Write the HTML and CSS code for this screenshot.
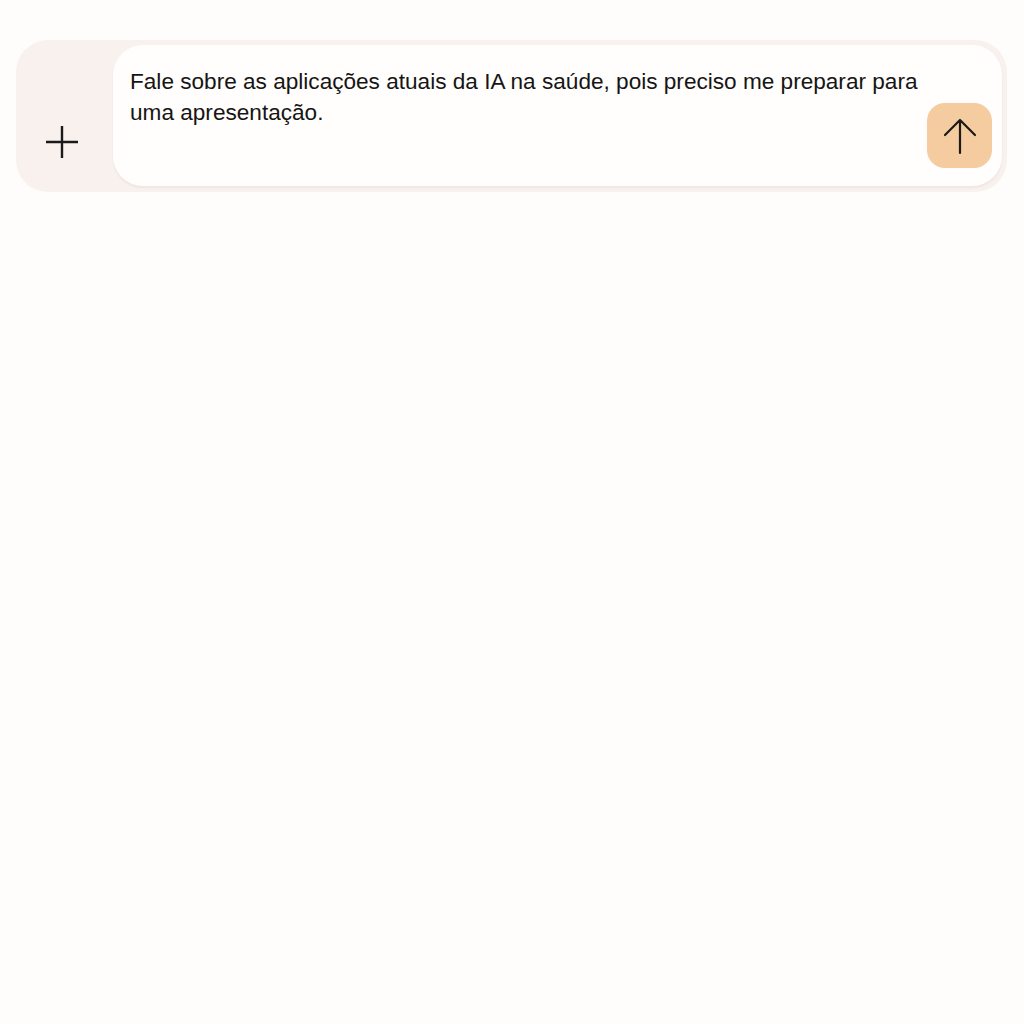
FILE: index.html
```html
<!DOCTYPE html>
<html lang="pt">
<head>
<meta charset="utf-8">
<title>Chat</title>
<link rel="stylesheet" href="styles.css">
</head>
<body>
<div class="composer">
  <button class="attach" aria-label="Adicionar">
    <svg width="34" height="34" viewBox="0 0 34 34"><path d="M17 1v32M1 17h32" stroke="#1c1a19" stroke-width="2.4" fill="none"/></svg>
  </button>
  <div class="field">
    <p class="text">Fale sobre as aplicações atuais da IA na saúde, pois preciso me preparar para uma apresentação.</p>
    <button class="send" aria-label="Enviar">
      <svg width="34" height="38" viewBox="0 0 34 38"><path d="M17 3v33M2 18L17 3l15 15" stroke="#1c1a19" stroke-width="2.2" fill="none" stroke-linecap="round" stroke-linejoin="round"/></svg>
    </button>
  </div>
</div>
</body>
</html>
```

FILE: styles.css
```css
html, body {
  margin: 0;
  padding: 0;
  background: #fffdfc;
}
body {
  padding: 40px 17px 0 16px;
  font-family: "Liberation Sans", Arial, sans-serif;
}
.composer {
  display: flex;
  align-items: stretch;
  height: 152px;
  box-sizing: border-box;
  padding: 5px 5px 6px 0;
  background: #f8f1ee;
  border-radius: 32px;
}
.attach {
  width: 97px;
  flex: none;
  border: 0;
  background: transparent;
  padding: 0 6px 27px 0;
  display: flex;
  align-items: flex-end;
  justify-content: center;
}
.field {
  flex: 1;
  min-width: 0;
  display: flex;
  align-items: flex-end;
  gap: 0;
  background: #fffefd;
  border-radius: 30px;
  padding: 21px 10px 18px 17px;
  box-shadow: 0 2px 2px rgba(200, 180, 170, 0.18);
}
.text {
  margin: 0;
  flex: 1;
  min-width: 0;
  align-self: flex-start;
  font-size: 22.6px;
  line-height: 31px;
  color: #161514;
}
.send {
  width: 65px;
  height: 65px;
  flex: none;
  border: 0;
  padding: 0;
  border-radius: 18px;
  background: #f5cba0;
  display: flex;
  align-items: center;
  justify-content: center;
}
```
